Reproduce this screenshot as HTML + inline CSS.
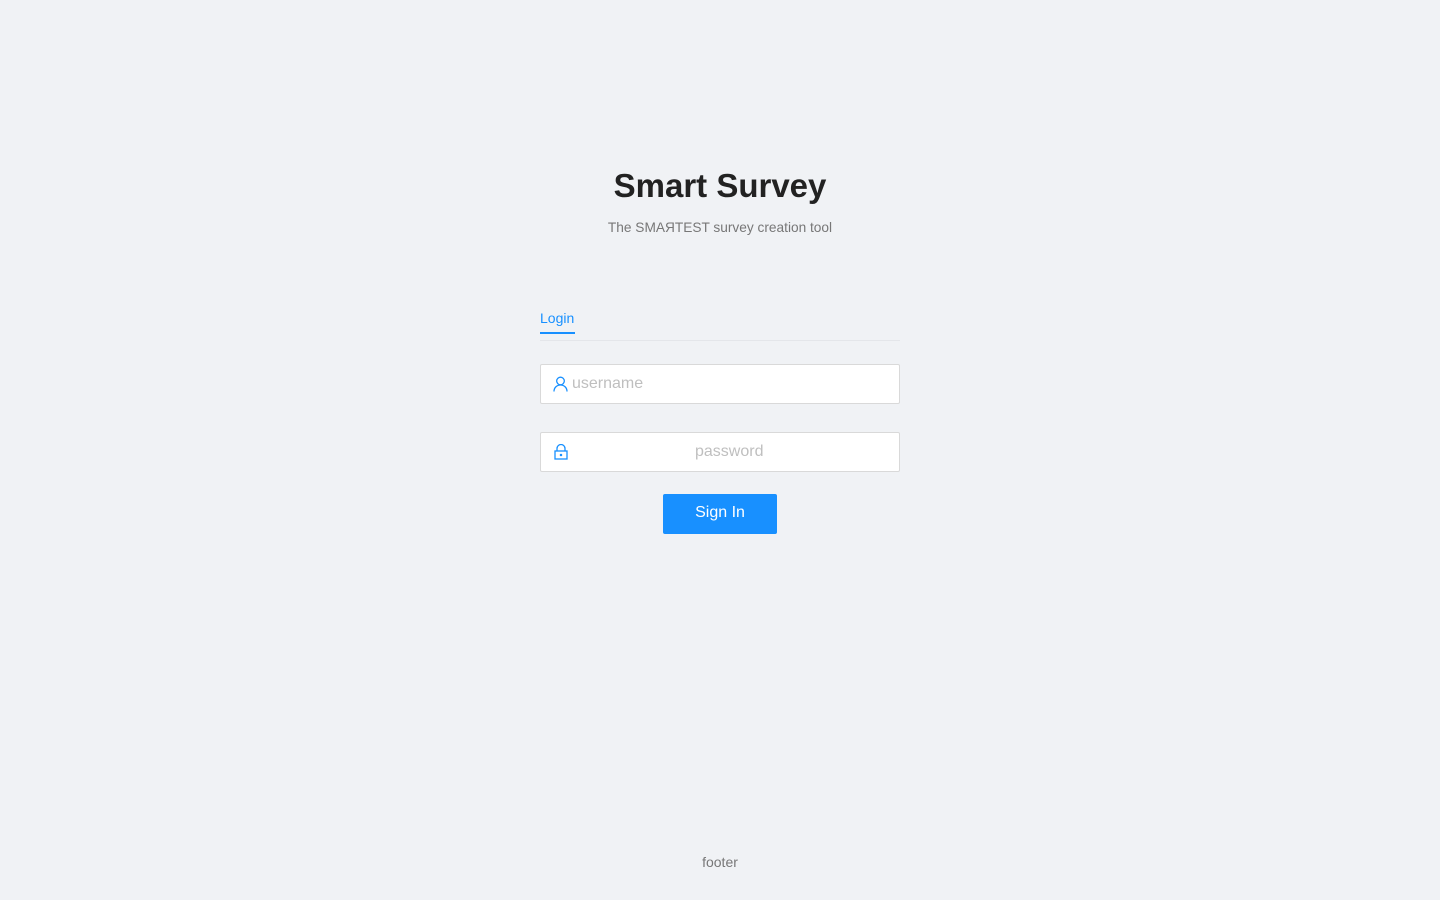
<!DOCTYPE html>
<html><head><style>
body{margin:0;width:1440px;height:900px;background:#f0f2f5;font-family:"Liberation Sans",sans-serif;position:relative;overflow:hidden}
.t{position:absolute;left:0;right:0;text-align:center}
.inp{position:absolute;left:540px;width:358px;height:38px;background:#fff;border:1px solid #d9d9d9;border-radius:2px}
.ph{position:absolute;top:10px;font-size:16px;color:#bfbfbf}
</style></head><body>
<div class="t" style="top:167px;font-size:33px;font-weight:bold;color:#222;letter-spacing:0">Smart Survey</div>
<div class="t" style="top:220px;font-size:13.7px;color:#777">The SMAЯTEST survey creation tool</div>
<div style="position:absolute;left:540px;top:310px;font-size:14px;color:#1890ff">Login</div>
<div style="position:absolute;left:540px;top:332px;width:35px;height:2px;background:#1890ff"></div>
<div style="position:absolute;left:540px;top:340px;width:360px;height:1px;background:#e4e6ea"></div>
<div class="inp" style="top:364px">
<svg style="position:absolute;left:12px;top:11px" width="15" height="16" viewBox="0 0 15 16" fill="none" stroke="#1890ff" stroke-width="1.3"><circle cx="7.5" cy="5" r="3.8"/><path d="M1 15.5c0-4 3-6.5 6.5-6.5s6.5 2.5 6.5 6.5"/></svg>
<span class="ph" style="left:31px">username</span></div>
<div class="inp" style="top:432px">
<svg style="position:absolute;left:13px;top:11px" width="14" height="16" viewBox="0 0 14 16" fill="none" stroke="#1890ff" stroke-width="1.3"><path d="M3 7V4.5a4 4 0 0 1 8 0V7"/><rect x="1" y="7" width="12" height="8"/><circle cx="7" cy="11" r=".6" fill="#1890ff"/></svg>
<span class="ph" style="left:154px">password</span></div>
<div style="position:absolute;left:663px;top:494px;width:114px;height:40px;background:#1890ff;border-radius:2px;color:#fff;font-size:16px;text-align:center;line-height:38px">Sign In</div>
<div class="t" style="top:854px;font-size:14px;color:#777">footer</div>
</body></html>
